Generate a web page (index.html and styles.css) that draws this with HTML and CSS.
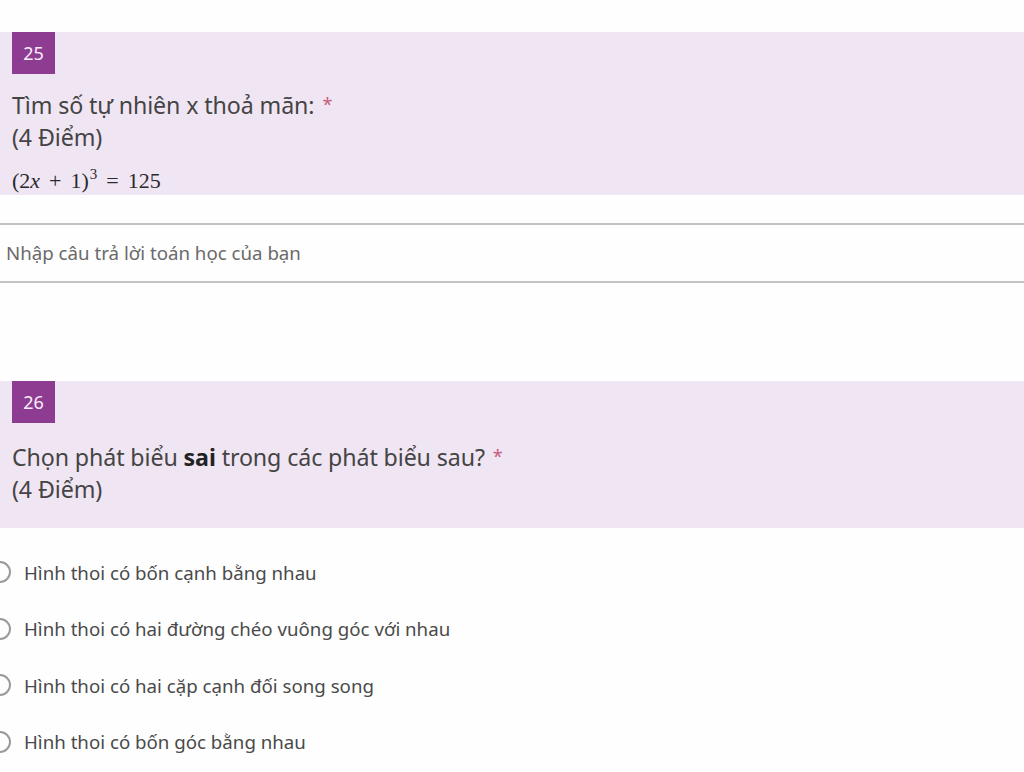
FILE: index.html
```html
<!DOCTYPE html>
<html lang="vi">
<head>
<meta charset="utf-8">
<title>Form</title>
<link rel="stylesheet" href="styles.css">
</head>
<body>
<main class="page">
  <section class="question q1">
    <header class="qhead">
      <div class="badge">25</div>
      <div class="title">Tìm số tự nhiên x thoả mãn: <span class="req">*</span></div>
      <div class="points">(4 Điểm)</div>
      <div class="math">(2<i>x</i><span class="op">+</span>1)<sup>3</sup><span class="op">=</span>125</div>
    </header>
    <div class="answer">Nhập câu trả lời toán học của bạn</div>
  </section>

  <section class="question q2">
    <header class="qhead">
      <div class="badge">26</div>
      <div class="title">Chọn phát biểu <b>sai</b> trong các phát biểu sau? <span class="req">*</span></div>
      <div class="points">(4 Điểm)</div>
    </header>
    <ul class="options">
      <li><span class="radio"></span>Hình thoi có bốn cạnh bằng nhau</li>
      <li><span class="radio"></span>Hình thoi có hai đường chéo vuông góc với nhau</li>
      <li><span class="radio"></span>Hình thoi có hai cặp cạnh đối song song</li>
      <li><span class="radio"></span>Hình thoi có bốn góc bằng nhau</li>
    </ul>
  </section>
</main>
<div class="taskbar"><span class="tab"></span></div>
</body>
</html>
```

FILE: styles.css
```css
html, body {
  margin: 0;
  padding: 0;
  background: #fefefe;
  overflow: hidden;
}
body {
  font-family: "Noto Sans", "Open Sans", sans-serif;
  color: #444;
  height: 772px;
  display: flex;
  flex-direction: column;
}
.page {
  padding-top: 32px;
  flex: 1;
}
.qhead {
  background: #f0e5f2;
  padding: 0 0 0 12px;
  display: flex;
  flex-direction: column;
  align-items: flex-start;
}
.badge {
  width: 43px;
  height: 42px;
  background: #8d3c91;
  color: #fbeefc;
  font-size: 18px;
  line-height: 42px;
  text-align: center;
}
.title {
  font-size: 23.2px;
  line-height: 32px;
  height: 32px;
  margin-top: 15px;
  letter-spacing: -0.1px;
}
.title b {
  font-weight: 700;
  color: #222;
}
.req {
  color: #c65c78;
  font-size: 18px;
  line-height: 0;
  vertical-align: 3px;
  margin-left: 2px;
}
.points {
  font-size: 23.2px;
  line-height: 32px;
  letter-spacing: -0.1px;
}
.math {
  font-family: "Liberation Serif", "Times New Roman", serif;
  font-size: 22px;
  line-height: 28px;
  height: 28px;
  margin-top: 14px;
  color: #2a2a2a;
}
.math .op {
  margin: 0 9px;
}
.math sup {
  font-size: 15px;
  line-height: 0;
  vertical-align: 9px;
  margin-left: 1px;
}
.answer {
  margin-top: 28px;
  border-top: 2px solid #c3c3c3;
  border-bottom: 2px solid #c3c3c3;
  height: 56px;
  line-height: 56px;
  padding-left: 6px;
  font-size: 18.7px;
  color: #6a6a6a;
}
.q2 {
  margin-top: 98px;
}
.q2 .qhead {
  padding-bottom: 23px;
}
.q2 .title {
  margin-top: 18px;
}
.options {
  list-style: none;
  margin: 0;
  padding: 30px 0 0 0;
}
.options li {
  display: flex;
  align-items: center;
  height: 28px;
  margin-bottom: 28.5px;
  font-size: 18.7px;
  color: #4a4a4a;
  padding-left: 24px;
  position: relative;
}
.radio {
  position: absolute;
  left: -11px;
  top: 3px;
  width: 18px;
  height: 18px;
  border: 2px solid #9a9a9a;
  border-radius: 50%;
}
.taskbar {
  height: 5px;
  background: #30496c;
  position: relative;
}
.tab {
  position: absolute;
  left: 60px;
  top: 0;
  width: 80px;
  height: 5px;
  background: #b7c2d0;
  border-radius: 3px 3px 0 0;
}
```
